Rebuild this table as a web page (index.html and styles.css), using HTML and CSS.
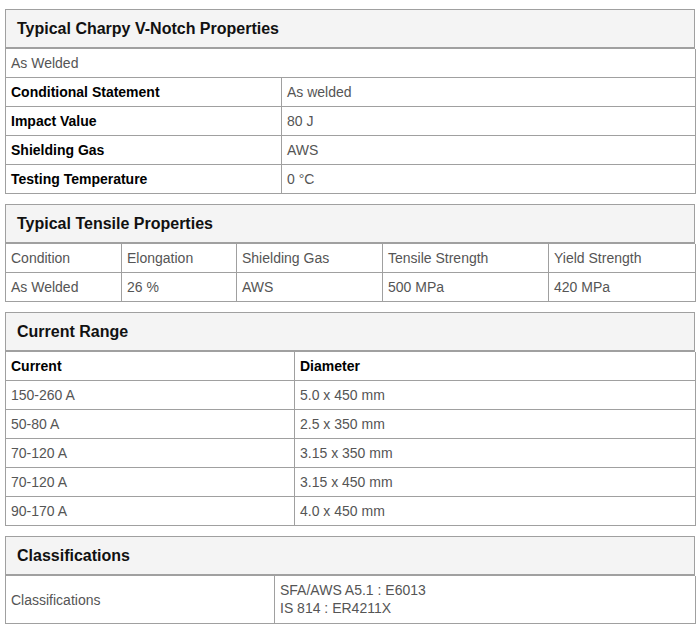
FILE: index.html
```html
<!DOCTYPE html>
<html>
<head>
<meta charset="utf-8">
<link rel="stylesheet" href="styles.css">
</head>
<body>
<div class="page">
  <section class="panel">
    <div class="panel-head">Typical Charpy V-Notch Properties</div>
    <table class="grid">
      <colgroup><col class="c1-1"><col class="c1-2"></colgroup>
      <tr><td colspan="2">As Welded</td></tr>
      <tr><th>Conditional Statement</th><td>As welded</td></tr>
      <tr><th>Impact Value</th><td>80 J</td></tr>
      <tr><th>Shielding Gas</th><td>AWS</td></tr>
      <tr><th>Testing Temperature</th><td>0 °C</td></tr>
    </table>
  </section>

  <section class="panel">
    <div class="panel-head">Typical Tensile Properties</div>
    <table class="grid">
      <colgroup><col class="c2-1"><col class="c2-2"><col class="c2-3"><col class="c2-4"><col class="c2-5"></colgroup>
      <tr><td>Condition</td><td>Elongation</td><td>Shielding Gas</td><td>Tensile Strength</td><td>Yield Strength</td></tr>
      <tr><td>As Welded</td><td>26 %</td><td>AWS</td><td>500 MPa</td><td>420 MPa</td></tr>
    </table>
  </section>

  <section class="panel">
    <div class="panel-head">Current Range</div>
    <table class="grid">
      <colgroup><col class="c3-1"><col class="c3-2"></colgroup>
      <tr><th>Current</th><th>Diameter</th></tr>
      <tr><td>150-260 A</td><td>5.0 x 450 mm</td></tr>
      <tr><td>50-80 A</td><td>2.5 x 350 mm</td></tr>
      <tr><td>70-120 A</td><td>3.15 x 350 mm</td></tr>
      <tr><td>70-120 A</td><td>3.15 x 450 mm</td></tr>
      <tr><td>90-170 A</td><td>4.0 x 450 mm</td></tr>
    </table>
  </section>

  <section class="panel">
    <div class="panel-head">Classifications</div>
    <table class="grid">
      <colgroup><col class="c4-1"><col class="c4-2"></colgroup>
      <tr><td>Classifications</td><td class="multi">SFA/AWS A5.1 : E6013<br>IS 814 : ER4211X</td></tr>
    </table>
  </section>
</div>
</body>
</html>
```

FILE: styles.css
```css
html, body {
  margin: 0;
  padding: 0;
  background: #ffffff;
}

body {
  font-family: "Liberation Sans", Arial, sans-serif;
  font-size: 14px;
  color: #555555;
}

.page {
  padding: 9px 3px 0 5px;
  width: 690px;
  display: flex;
  flex-direction: column;
  gap: 10px;
}

.panel {
  width: 690px;
}

.panel-head {
  border: 1px solid #a0a0a0;
  border-bottom: 2px solid #a0a0a0;
  background: #f4f4f4;
  padding: 9px 11px 9px 11px;
  font-size: 16px;
  line-height: 19px;
  font-weight: bold;
  color: #111111;
}

.grid {
  width: 690px;
  border-collapse: collapse;
  table-layout: fixed;
}

.grid td,
.grid th {
  border: 1px solid #a0a0a0;
  border-top: none;
  padding: 5px 5px;
  line-height: 18px;
  text-align: left;
  vertical-align: middle;
  font-size: 14px;
  white-space: nowrap;
}

.grid tr + tr td,
.grid tr + tr th {
  border-top: 1px solid #a0a0a0;
}

.grid th {
  font-weight: bold;
  color: #000000;
}

.grid td {
  color: #555555;
}

.grid td.multi {
  padding-top: 5px;
  padding-bottom: 6px;
  line-height: 18px;
}

.c1-1 { width: 276px; }
.c1-2 { width: 414px; }

.c2-1 { width: 116px; }
.c2-2 { width: 115px; }
.c2-3 { width: 146px; }
.c2-4 { width: 166px; }
.c2-5 { width: 147px; }

.c3-1 { width: 289px; }
.c3-2 { width: 401px; }

.c4-1 { width: 269px; }
.c4-2 { width: 421px; }
```
